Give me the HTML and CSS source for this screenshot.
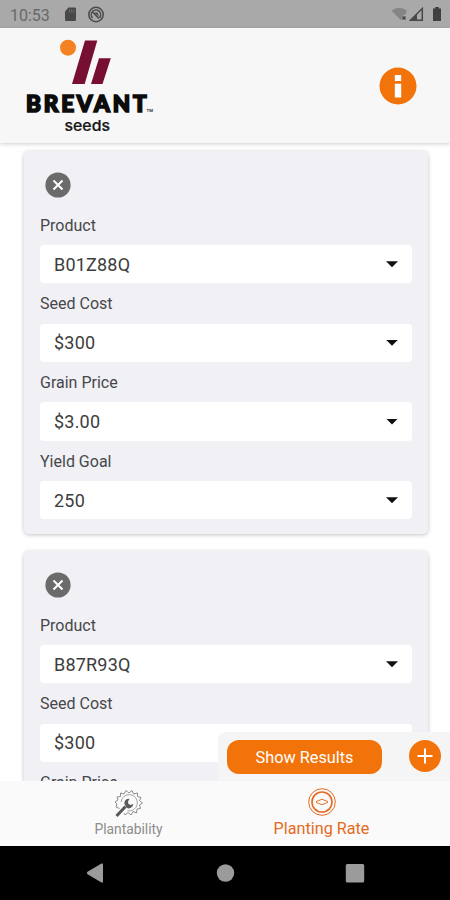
FILE: index.html
```html
<!DOCTYPE html>
<html lang="en">
<head>
<meta charset="utf-8">
<title>Brevant Seeds - Planting Rate</title>
<link rel="stylesheet" href="styles.css">
</head>
<body>
<div class="screen">
  <div class="status">
    <span class="clock">10:53</span>
    <svg class="status-left" width="42" height="18" viewBox="0 0 42 18">
      <path d="M5.500 1.500H12q1 0 1 1V14q0 1-1 1H3q-1 0-1-1V5.500z" fill="#484848"/>
      <path d="M6.500 3.500v3M8.700 3.500v3M10.900 3.500v3" stroke="#777" stroke-width=".9"/>
      <circle cx="33" cy="8.500" r="7.200" fill="none" stroke="#4b4b4b" stroke-width="1.500"/>
      <path d="M29.500 12a4.700 4.700 0 1 1 7-.2M29 5.500l7 7" fill="none" stroke="#4b4b4b" stroke-width="1.500"/>
      <path d="M31 6.500h3.500l1.500 4z" fill="#4b4b4b"/>
    </svg>
    <svg class="status-right" width="52" height="18" viewBox="0 0 52 18">
      <path d="M.500 4.500Q8-1 16 4.500L14.500 8.500 11 10v3L9.500 14z" fill="#858585"/>
      <path d="M11.500 10.500l3 3m0-3l-3 3" stroke="#454545" stroke-width="1.500"/>
      <path d="M19.500 14.300L31.300 2.500v11.800z" fill="none" stroke="#484848" stroke-width="1.500"/>
      <path d="M19 14.500l7-7v7z" fill="#484848"/>
      <path d="M42 2.500h2.200V1h3.600v1.500H50V15h-8z" fill="#3f3f3f"/>
    </svg>
  </div>
  <header class="header">
    <svg class="logo" width="130" height="98" viewBox="0 0 130 98">
      <circle cx="43" cy="11.700" r="8" fill="#f58220"/>
      <path d="M60 4.500h12.300L59.700 48H47zM74 22.300h11.800L77.500 48H66z" fill="#760f31"/>
      <text x="1" y="76" class="brand" textLength="120.500" lengthAdjust="spacing">BREVANT</text>
      <text x="121.500" y="75.500" class="tm">TM</text>
      <text x="39.500" y="94.500" class="sub" textLength="45.500" lengthAdjust="spacingAndGlyphs">seeds</text>
    </svg>
    <svg class="info" width="38" height="38" viewBox="0 0 38 38">
      <circle cx="19" cy="19" r="18.500" fill="#f2730a"/>
      <path d="M15.800 8h6.400v6h-6.400zM15.800 16.800h6.400v13.700h-6.400z" fill="#fff"/>
    </svg>
  </header>
  <main class="content">
    <section class="card">
      <div class="card-top"><svg width="26" height="26" viewBox="0 0 26 26"><circle cx="13" cy="13" r="12.600" fill="#6b6b6b"/><path d="M8.500 8.500l9 9m0-9l-9 9" stroke="#fff" stroke-width="2"/></svg></div>
      <div class="label">Product</div><div class="field"><span>B01Z88Q</span><i class="arrow"></i></div>
      <div class="label">Seed Cost</div><div class="field"><span>$300</span><i class="arrow"></i></div>
      <div class="label">Grain Price</div><div class="field"><span>$3.00</span><i class="arrow"></i></div>
      <div class="label">Yield Goal</div><div class="field"><span>250</span><i class="arrow"></i></div>
    </section>
    <section class="card">
      <div class="card-top"><svg width="26" height="26" viewBox="0 0 26 26"><circle cx="13" cy="13" r="12.600" fill="#6b6b6b"/><path d="M8.500 8.500l9 9m0-9l-9 9" stroke="#fff" stroke-width="2"/></svg></div>
      <div class="label">Product</div><div class="field"><span>B87R93Q</span><i class="arrow"></i></div>
      <div class="label">Seed Cost</div><div class="field"><span>$300</span><i class="arrow"></i></div>
      <div class="label">Grain Price</div>
    </section>
    <div class="actions">
      <div class="show">Show Results</div>
      <svg width="32" height="32" viewBox="0 0 32 32"><circle cx="16" cy="16" r="16" fill="#f2730a"/><path d="M8.500 16h15M16 8.500v15" stroke="#fff" stroke-width="2"/></svg>
    </div>
  </main>
  <nav class="tabs">
    <div class="tab">
      <svg width="30" height="30" viewBox="0 0 30 30" fill="none">
        <path d="M5.500 19.500L2 18l1-3-2-2 3-2-1-3 3.500-.5V4l3.500 1 2-3.500L15 4l3-2.500 1.500 3.500 4-1v3.500l3.500 1-1.500 3 3 2.500-3 2 1 3.500-3.500.5-.5 4-3.500-1.500-2 3.500-3-2.500-3 2.500-1-2" stroke="#8e8e8e" stroke-width="1"/>
        <path d="M7 13a8.200 8.200 0 1 1 6.500 8.800" stroke="#a5a5a5" stroke-width="1"/>
        <path d="M2.500 27l9-9.500" stroke="#585858" stroke-width="3"/>
        <path d="M15.500 10a4 4 0 0 0-4.500 6l1.500 2.500a4.200 4.200 0 0 0 6.700-3.500l-3 1-2-1.500-.2-2z" fill="#5c5c5c"/>
      </svg>
      <span class="plant">Plantability</span>
    </div>
    <div class="tab active">
      <svg width="30" height="30" viewBox="0 0 30 30" fill="none" stroke="#e66a22">
        <circle cx="15" cy="15" r="13.300" stroke-width="1"/><circle cx="15" cy="15" r="10" stroke-width="1.600"/>
        <path d="M11.500 13.800l3.500-1.600 3.500 1.600M11.500 16.200l3.500 1.600 3.500-1.600M11.500 13.300L9 15l2.500 1.700M18.500 13.300L21 15l-2.500 1.700" stroke-width="1"/>
      </svg>
      <span class="rate">Planting Rate</span>
    </div>
  </nav>
  <div class="system">
    <svg width="20" height="24" viewBox="0 0 20 24"><path d="M2.500 10.800L16.500 2.500q1.500-.5 1.500 1v17q0 1.500-1.500 1L2.500 13.200q-1.500-1.200 0-2.400z" fill="#9b9b9b"/></svg>
    <svg width="20" height="24" viewBox="0 0 20 24"><circle cx="10.500" cy="12" r="8.700" fill="#9b9b9b"/></svg>
    <svg width="20" height="24" viewBox="0 0 20 24"><rect x=".8" y="3" width="18.400" height="18.400" rx="1.500" fill="#9b9b9b"/></svg>
  </div>
</div>
</body>
</html>
```
FILE: styles.css
```css
* { box-sizing: border-box; }
body { margin: 0; font-family: Roboto, sans-serif; background: #fff; }
svg { display: block; flex: none; }
.screen { width: 450px; height: 900px; display: flex; flex-direction: column; overflow: hidden; }
.status { height: 28px; flex: none; background: #a9a9a9; display: flex; align-items: center; padding: 2px 7px 0 10px; }
.clock { font-size: 16px; color: #686868; width: 53px; }
.status-right { margin-left: auto; }
.header { height: 115px; flex: none; background: #f7f7f7; display: flex; justify-content: space-between; padding: 8px 33px 0 25px; box-shadow: 0 1px 4px rgba(0,0,0,.2); z-index: 1; }
.info { margin-top: 31px; }
.brand { font: 900 22.500px Lato, sans-serif; fill: #0c0c0c; stroke: #0c0c0c; stroke-width: 1.700px; }
.tm { font: 700 4px Inter, sans-serif; fill: #333; }
.sub { font: 500 15px Inter, sans-serif; fill: #161616; stroke: #161616; stroke-width: .2px; }
.content { height: 638px; flex: none; overflow: hidden; padding: 8px 22px 0 24px; position: relative; }
.card { height: 383px; margin-bottom: 17px; padding: 0 16px; background: #f0f0f5; border-radius: 5px; box-shadow: 0 1px 4px rgba(0,0,0,.24); }
.card-top { height: 53.800px; padding: 21.400px 0 0 4.500px; }
.label { height: 40.170px; padding-top: 10px; line-height: 22px; font-size: 16px; color: #47474b; }
.field { height: 38.500px; background: #fff; border-radius: 4px; display: flex; align-items: center; justify-content: space-between; padding: 0 14px; font-size: 18px; letter-spacing: .2px; color: #3d3d3d; }
.arrow { width: 12px; height: 6px; background: #111; clip-path: polygon(0 0, 100% 0, 50% 100%); }
.actions { position: absolute; right: 0; bottom: 0; width: 232px; height: 49px; background: #f5f5f5; border-radius: 8px 0 0 0; display: flex; justify-content: space-between; align-items: flex-start; padding: 8px 9px 0; }
.show { width: 155px; height: 34px; border-radius: 12px; background: #f2730a; color: #fff; font-size: 16.300px; line-height: 36px; text-align: center; }
.tabs { height: 65px; flex: none; background: #fafafa; display: flex; padding: 0 32px; }
.tab { flex: 1; display: flex; flex-direction: column; align-items: center; padding-top: 8px; color: #8c8c8c; }
.tab.active { color: #e66a22; padding-top: 6px; }
.plant { font-size: 13.800px; line-height: 20px; }
.rate { font-size: 16.200px; line-height: 23px; }
.system { height: 54px; flex: none; background: #000; display: flex; justify-content: space-between; align-items: center; padding: 0 85px; }
```
